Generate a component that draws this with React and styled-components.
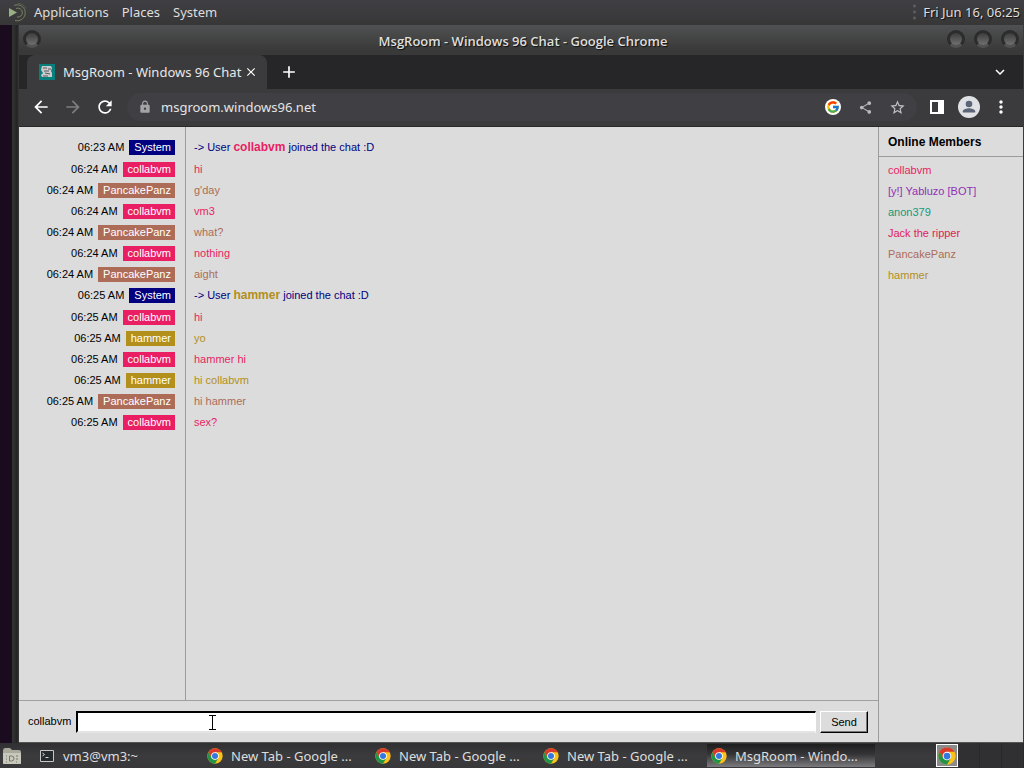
import React from "react";
import styled, { createGlobalStyle, css } from "styled-components";
import {
  MdArrowBack, MdArrowForward, MdRefresh, MdLock, MdShare, MdStarBorder,
  MdMoreVert, MdKeyboardArrowDown, MdClose, MdAdd,
} from "react-icons/md";
import { FcGoogle } from "react-icons/fc";

const Global = createGlobalStyle`
  * { box-sizing: border-box; }
  body { margin: 0; background: #1b0b1f; }
  button, input { font: inherit; color: inherit; margin: 0; }
  ul, ol { list-style: none; margin: 0; padding: 0; }
`;

const uiFont = `"Noto Sans", "Open Sans", sans-serif`;
const pageFont = `"Liberation Sans", Arial, sans-serif`;

const Desktop = styled.div`
  display: flex;
  flex-direction: column;
  min-height: 100vh;
  font: 13px/18px ${uiFont};
  color: #dededc;
`;

const plainButton = css`
  display: flex;
  align-items: center;
  justify-content: center;
  padding: 0;
  border: 0;
  background: none;
  flex: none;
`;

const TopPanel = styled.header`
  display: flex;
  align-items: center;
  height: 25px;
  padding: 0 4px 2px 8px;
  background: linear-gradient(#3f3e43, #383737);
  text-shadow: 1px 1px 1px #111;
`;

const PanelMenu = styled.nav`
  display: flex;
  gap: 13px;
  margin-left: 6px;
  flex: 1;
`;

const MenuButton = styled.button`${plainButton}`;

const Clock = styled.time`
  padding-left: 11px;
  background: radial-gradient(circle, #5c5c60 1px, transparent 2px) 0 0 / 5px 6px repeat-y;
`;

const WindowFrame = styled.main`
  flex: 1;
  display: flex;
  flex-direction: column;
  margin-left: 12px;
  padding: 0 1px 0 7px;
  background: linear-gradient(90deg, #343434 0, #2c2c2c 3px, #222 5px, #3b3b3a 7px);
`;

const TitleBar = styled.div`
  display: flex;
  align-items: center;
  justify-content: space-between;
  height: 30px;
  padding: 0 4px 4px;
  border-top: 1px solid #4e5051;
  background: linear-gradient(#4f5051, #393939 85%);
`;

const WindowTitle = styled.h1`
  margin: 4px 0 0 58px;
  font: 600 13px/18px "Open Sans", "Noto Sans", sans-serif;
  text-shadow: 1px 1px 1px #111;
`;

const WindowButtons = styled.div`
  display: flex;
  gap: 9px;
`;

const RoundButton = styled.button`
  ${plainButton}
  width: 18px;
  height: 18px;
  border-radius: 9px;
  border: 3px solid #2c2c2c;
  border-bottom-color: #525252;
  background: linear-gradient(#3d3d3d, #707070);
`;

const TabStrip = styled.div`
  display: flex;
  align-items: center;
  justify-content: space-between;
  height: 34px;
  padding-left: 8px;
  background: #262628;
`;

const Tabs = styled.div`
  display: flex;
  align-items: center;
`;

const Tab = styled.div`
  display: flex;
  align-items: center;
  width: 240px;
  height: 34px;
  padding: 0 8px 0 12px;
  border-radius: 8px 8px 0 0;
  background: #3b3b3d;
  color: #e8e8e8;
`;

const TabTitle = styled.span`
  flex: 1;
  margin-left: 8px;
  white-space: nowrap;
`;

const IconButton = styled.button`
  ${plainButton}
  width: ${(p) => p.$w || 20}px;
  height: 24px;
  color: ${(p) => p.$color || "#fff"};
`;

const Toolbar = styled.div`
  display: flex;
  align-items: center;
  height: 38px;
  padding: 0 12px 1px;
  border-bottom: 1px solid #2a2828;
  background: #3b3b3d;
`;

const NavButtons = styled.div`
  display: flex;
  gap: 12px;
`;

const AddressBar = styled.div`
  flex: 1;
  display: flex;
  align-items: center;
  height: 28px;
  margin: 0 10px 0 12px;
  padding: 0 10px 0 11px;
  border-radius: 14px;
  background: #404044;
  gap: 12px;
`;

const Url = styled.input`
  flex: 1;
  min-width: 0;
  padding: 0 0 0 9px;
  margin-left: -12px;
  border: 0;
  outline: 0;
  background: none;
  color: #e4e4e4;
`;

const BrowserButtons = styled.div`
  display: flex;
  align-items: center;
  gap: 11px;
`;

const Avatar = styled.button`
  ${plainButton}
  width: 22px;
  height: 22px;
  border-radius: 11px;
  overflow: hidden;
  background: #dfe1e5;
`;

const ChatPage = styled.section`
  flex: 1;
  display: flex;
  background: #dcdcdc;
  border-bottom: 1px solid #555;
  color: #000;
  font: 11px/21px ${pageFont};
`;

const ChatPane = styled.div`
  flex: 1;
  display: flex;
  flex-direction: column;
`;

const MessageLog = styled.ol`
  flex: 1;
  padding-top: 10px;
  background: linear-gradient(#9c9c9c, #9c9c9c) 166px 0 / 1px 100% no-repeat;
`;

const Message = styled.li`
  display: grid;
  grid-template-columns: 156px 1fr;
  column-gap: 19px;
  height: ${(p) => (p.$system ? 22 : 21)}px;
`;

const MessageMeta = styled.div`
  display: flex;
  justify-content: flex-end;
  align-items: center;
  gap: 5px;
  height: 21px;
  white-space: nowrap;
`;

const NameTag = styled.span`
  height: 15px;
  padding: 0 4px 0 5px;
  line-height: 15px;
  background: ${(p) => p.$color};
  color: #fff;
`;

const MessageText = styled.span`
  color: ${(p) => p.$color};
`;

const JoinedName = styled.b`
  font-size: 12px;
  color: ${(p) => p.$color};
`;

const Composer = styled.form`
  display: flex;
  align-items: center;
  height: 42px;
  padding: 0 10px 0 9px;
  border-top: 1px solid #a0a0a0;
`;

const InputWrap = styled.div`
  position: relative;
  flex: 1;
  display: flex;
  margin: 0 4px 0 5px;
`;

const MessageInput = styled.input`
  flex: 1;
  min-width: 0;
  height: 22px;
  padding: 0 4px;
  outline: 0;
  background: #fff;
  border-style: solid;
  border-color: #000 #fff #e4e4e4 #000;
  border-width: 2px 1px 2px 2px;
`;

const Pointer = styled.svg`
  position: absolute;
  left: 132px;
  top: 4px;
`;

const SendButton = styled.button`
  width: 48px;
  height: 22px;
  padding: 0;
  background: #dcdcdc;
  border: 1px solid;
  border-color: #fff #000 #000 #fff;
  box-shadow: inset -1px -1px #777;
`;

const Members = styled.aside`
  width: 145px;
  border-left: 1px solid #9c9c9c;
`;

const MembersTitle = styled.h2`
  margin: 0;
  height: 30px;
  padding-left: 9px;
  border-bottom: 1px solid #9c9c9c;
  font: bold 12px/30px ${pageFont};
`;

const MemberList = styled.ul`
  padding: 3px 9px;
`;

const Member = styled.li`
  color: ${(p) => p.$color};
`;

const Taskbar = styled.footer`
  display: flex;
  align-items: center;
  height: 25px;
  background: linear-gradient(#303033, #3b3b3e 50%, #38383a);
  text-shadow: 1px 1px 1px #111;
`;

const FolderButton = styled.button`
  ${plainButton}
  width: 24px;
  margin-right: 11px;
`;

const Task = styled.button`
  ${plainButton}
  justify-content: flex-start;
  gap: 8px;
  width: 168px;
  height: 23px;
  padding: 0 4px;
  white-space: nowrap;
  background: ${(p) => (p.$active ? "linear-gradient(#1d1d1e, #353537 45%, #7b7b7f)" : "none")};
`;

const Tray = styled.div`
  display: flex;
  height: 25px;
  margin-left: auto;
`;

const TrayButton = styled.button`
  ${plainButton}
  width: 22px;
  height: 23px;
  margin-top: 1px;
  border: 1px solid #fff;
  background: #8b8b8b;
`;

const Workspace = styled.button`
  ${plainButton}
  width: 22px;
  border-right: 1px solid #29292b;
  background: #303033;
`;

const ChromeIcon = ({ size = 16 }) => (
  <svg width={size} height={size} viewBox="0 0 48 48" aria-hidden="true">
    <circle cx="24" cy="24" r="23" fill="#fbc116" />
    <path d="M4.1 12.5A23 23 0 0 1 43.9 12.5H24L14 29.7Z" fill="#d93a2b" />
    <path d="M4.1 12.5L14 29.7L24 35.5L34 29.7L24 47A23 23 0 0 1 4.1 12.5Z" fill="#239348" />
    <circle cx="24" cy="24" r="11.5" fill="#fff" />
    <circle cx="24" cy="24" r="9" fill="#3478de" />
  </svg>
);

const MateIcon = () => (
  <svg width="20" height="20" viewBox="0 0 20 20" fill="none" aria-hidden="true">
    <path d="M1 6v9l8-4.500Z" fill="#9aaf83" />
    <path d="M6 3.500A8 8 0 1 1 7 18.500M8 6.500A4.500 4.500 0 1 1 9 15" stroke="#77835f" />
    <path d="M10 1.500a9 9 0 0 1 8 5" stroke="#59624a" />
  </svg>
);

const SiteIcon = () => (
  <svg width="16" height="16" viewBox="0 0 16 16" aria-hidden="true">
    <path d="M0 0h16v16H0z" fill="#087f7c" />
    <path d="M3 2h9l1 2-1 3 1 2v4H3l-1-2 2-2-2-3z" fill="#c9cccb" />
    <path d="M4 4l4 0M9 5h3M5 7l5 0M6 9l5 1M4 12h5" stroke="#5f5565" />
  </svg>
);

const SidePanelIcon = () => (
  <svg width="16" height="16" viewBox="0 0 16 16" aria-hidden="true">
    <path fillRule="evenodd" d="M1 1h14v14H1zM3 3v10h6V3z" fill="#fff" />
  </svg>
);

const PersonIcon = () => (
  <svg width="22" height="22" viewBox="0 0 22 22" fill="#5c6577" aria-hidden="true">
    <circle cx="11" cy="8" r="3.300" />
    <path d="M4.800 16.500v-1.200c0-2 4-3 6.200-3s6.200 1 6.200 3v1.200Z" />
  </svg>
);

const FolderIcon = () => (
  <svg width="20" height="18" viewBox="0 0 20 18" aria-hidden="true">
    <path d="M1 3.500Q1 1 3 1h5l2 2h7q2 0 2 2v11q0 1-1 1H2q-1 0-1-1z" fill="#aaa99c" />
    <path d="M1 6h18v10q0 1-1 1H2q-1 0-1-1z" fill="#c9c8bc" />
    <path d="M7.500 9v5h2q2.500 0 2.500-2.500T9.500 9zM4 9h1M4 12h1M14 9h2M14 12h2M4 15h1M14 15h1" fill="none" stroke="#77766d" />
  </svg>
);

const TerminalIcon = () => (
  <svg width="16" height="14" viewBox="0 0 16 14" aria-hidden="true">
    <path d="M1.500 1.500h13v11h-13z" fill="#262b2e" stroke="#c5c8c8" />
    <path d="M3.500 4l2 1.500-2 1.500M6.500 8.500h3" fill="none" stroke="#d8d8d8" />
  </svg>
);

const colors = {
  System: "#000080",
  collabvm: "#e91e63",
  PancakePanz: "#ad6c58",
  hammer: "#b38f1b",
};

const messages = [
  ["06:23 AM", "System", null, "collabvm"],
  ["06:24 AM", "collabvm", "hi"],
  ["06:24 AM", "PancakePanz", "g'day"],
  ["06:24 AM", "collabvm", "vm3"],
  ["06:24 AM", "PancakePanz", "what?"],
  ["06:24 AM", "collabvm", "nothing"],
  ["06:24 AM", "PancakePanz", "aight"],
  ["06:25 AM", "System", null, "hammer"],
  ["06:25 AM", "collabvm", "hi"],
  ["06:25 AM", "hammer", "yo"],
  ["06:25 AM", "collabvm", "hammer hi"],
  ["06:25 AM", "hammer", "hi collabvm"],
  ["06:25 AM", "PancakePanz", "hi hammer"],
  ["06:25 AM", "collabvm", "sex?"],
];

const members = [
  ["collabvm", "#e91e63"],
  ["[y!] Yabluzo [BOT]", "#9130b4"],
  ["anon379", "#0f9a80"],
  ["Jack the ripper", "#e01b58"],
  ["PancakePanz", "#ad6c58"],
  ["hammer", "#b38f1b"],
];

const tasks = ["New Tab - Google ...", "New Tab - Google ...", "New Tab - Google ...", "MsgRoom - Windo..."];

export default function App() {
  return (
    <Desktop>
      <Global />
      <TopPanel>
        <MateIcon />
        <PanelMenu>
          <MenuButton>Applications</MenuButton>
          <MenuButton>Places</MenuButton>
          <MenuButton>System</MenuButton>
        </PanelMenu>
        <Clock>Fri Jun 16, 06:25</Clock>
      </TopPanel>

      <WindowFrame>
        <TitleBar>
          <RoundButton aria-label="Window menu" />
          <WindowTitle>MsgRoom - Windows 96 Chat - Google Chrome</WindowTitle>
          <WindowButtons>
            <RoundButton aria-label="Minimize" />
            <RoundButton aria-label="Maximize" />
            <RoundButton aria-label="Close" />
          </WindowButtons>
        </TitleBar>

        <TabStrip>
          <Tabs>
            <Tab>
              <SiteIcon />
              <TabTitle>MsgRoom - Windows 96 Chat</TabTitle>
              <IconButton $w={16} aria-label="Close tab"><MdClose size={14} /></IconButton>
            </Tab>
            <IconButton $w={44} aria-label="New tab"><MdAdd size={20} /></IconButton>
          </Tabs>
          <IconButton $w={46} aria-label="Search tabs"><MdKeyboardArrowDown size={18} /></IconButton>
        </TabStrip>

        <Toolbar>
          <NavButtons>
            <IconButton aria-label="Back"><MdArrowBack size={20} /></IconButton>
            <IconButton $color="#7e7e80" aria-label="Forward"><MdArrowForward size={20} /></IconButton>
            <IconButton aria-label="Reload"><MdRefresh size={20} /></IconButton>
          </NavButtons>
          <AddressBar>
            <MdLock size={14} color="#a4a4a6" />
            <Url aria-label="Address" defaultValue="msgroom.windows96.net" />
            <IconButton aria-label="Google">
              <svg width="16" height="16" viewBox="0 0 16 16" aria-hidden="true">
                <circle cx="8" cy="8" r="8" fill="#fff" />
                <FcGoogle x="1" y="1" size={14} />
              </svg>
            </IconButton>
            <IconButton $color="#b9b9bb" aria-label="Share"><MdShare size={15} /></IconButton>
            <IconButton $color="#c4c4c6" aria-label="Bookmark"><MdStarBorder size={17} /></IconButton>
          </AddressBar>
          <BrowserButtons>
            <IconButton aria-label="Side panel"><SidePanelIcon /></IconButton>
            <Avatar aria-label="Profile"><PersonIcon /></Avatar>
            <IconButton aria-label="Menu"><MdMoreVert size={20} /></IconButton>
          </BrowserButtons>
        </Toolbar>

        <ChatPage>
          <ChatPane>
            <MessageLog>
              {messages.map(([time, name, text, joined], i) => (
                <Message key={i} $system={name === "System"}>
                  <MessageMeta>
                    <time>{time}</time>
                    <NameTag $color={colors[name]}>{name}</NameTag>
                  </MessageMeta>
                  <MessageText $color={colors[name]}>
                    {joined ? (
                      <>-&gt; User <JoinedName $color={colors[joined]}>{joined}</JoinedName> joined the chat :D</>
                    ) : text}
                  </MessageText>
                </Message>
              ))}
            </MessageLog>
            <Composer onSubmit={(e) => e.preventDefault()}>
              <label htmlFor="message">collabvm</label>
              <InputWrap>
                <MessageInput id="message" type="text" />
                <Pointer width="9" height="15" viewBox="0 0 9 15" stroke="#000" aria-hidden="true">
                  <path d="M1 .5h7M4.500 0v15M1 14.500h7" />
                </Pointer>
              </InputWrap>
              <SendButton>Send</SendButton>
            </Composer>
          </ChatPane>
          <Members>
            <MembersTitle>Online Members</MembersTitle>
            <MemberList>
              {members.map(([name, color]) => <Member key={name} $color={color}>{name}</Member>)}
            </MemberList>
          </Members>
        </ChatPage>
      </WindowFrame>

      <Taskbar>
        <FolderButton aria-label="Show files"><FolderIcon /></FolderButton>
        <Task><TerminalIcon />vm3@vm3:~</Task>
        {tasks.map((title, i) => (
          <Task key={i} $active={i === 3}><ChromeIcon />{title}</Task>
        ))}
        <Tray>
          <TrayButton aria-label="Google Chrome"><ChromeIcon size={18} /></TrayButton>
          <Workspace aria-label="Workspace 1" />
          <Workspace aria-label="Workspace 2" />
          <Workspace aria-label="Workspace 3" />
        </Tray>
      </Taskbar>
    </Desktop>
  );
}
